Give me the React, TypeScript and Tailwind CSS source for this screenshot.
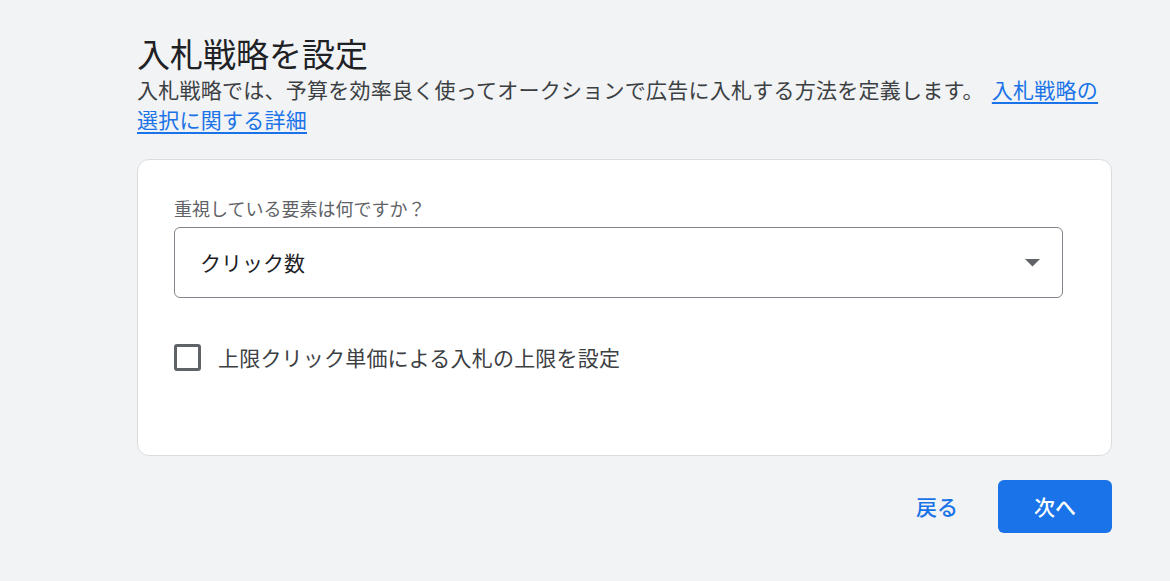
import React from "react";

export default function App() {
  const font = { fontFamily: '"Noto Sans CJK JP", "Noto Sans", sans-serif' };
  return (
    <div className="w-full min-h-[581px] bg-[#f1f3f4]" style={font}>
      <div className="ml-[137px] w-[975px] pt-[33px]">
        <h1 className="text-[33px] leading-[40px] text-[#202124] font-normal">入札戦略を設定</h1>
        <p className="mt-[1px] text-[21px] leading-[30px] tracking-[0.25px] text-[#3c4043]">
          入札戦略では、予算を効率良く使ってオークションで広告に入札する方法を定義します。{" "}
          <a href="#" className="ml-[3px] text-[#1a73e8] underline underline-offset-[4px]">入札戦略の選択に関する詳細</a>
        </p>
        <div className="mt-[25px] h-[297px] rounded-[12px] border border-[#dadce0] bg-white pl-[36px] pr-[48px] pt-[36px]">
          <div className="text-[18px] leading-[24px] text-[#5f6368]">重視している要素は何ですか？</div>
          <div className="mt-[7px] flex h-[71px] items-center justify-between rounded-[6px] border border-[#80868b] pl-[25px] pr-[22px]">
            <span className="text-[21px] text-[#202124]">クリック数</span>
            <svg width="15" height="8" viewBox="0 0 15 8">
              <path d="M0 0 L15 0 L7.5 7.5 Z" fill="#5f6368" />
            </svg>
          </div>
          <label className="mt-[45px] flex items-center">
            <span className="block h-[27px] w-[27px] rounded-[3px] border-[3px] border-[#5f6368]"></span>
            <span className="ml-[17px] text-[21px] leading-[28px] tracking-[0.2px] text-[#3c4043]">上限クリック単価による入札の上限を設定</span>
          </label>
        </div>
        <div className="mt-[24px] flex items-center justify-end">
          <button className="mr-[25px] px-[15px] py-[10px] text-[21px] font-medium text-[#1a73e8]">戻る</button>
          <button className="h-[53px] w-[114px] rounded-[6px] bg-[#1a73e8] text-[21px] font-medium text-white">次へ</button>
        </div>
      </div>
    </div>
  );
}
